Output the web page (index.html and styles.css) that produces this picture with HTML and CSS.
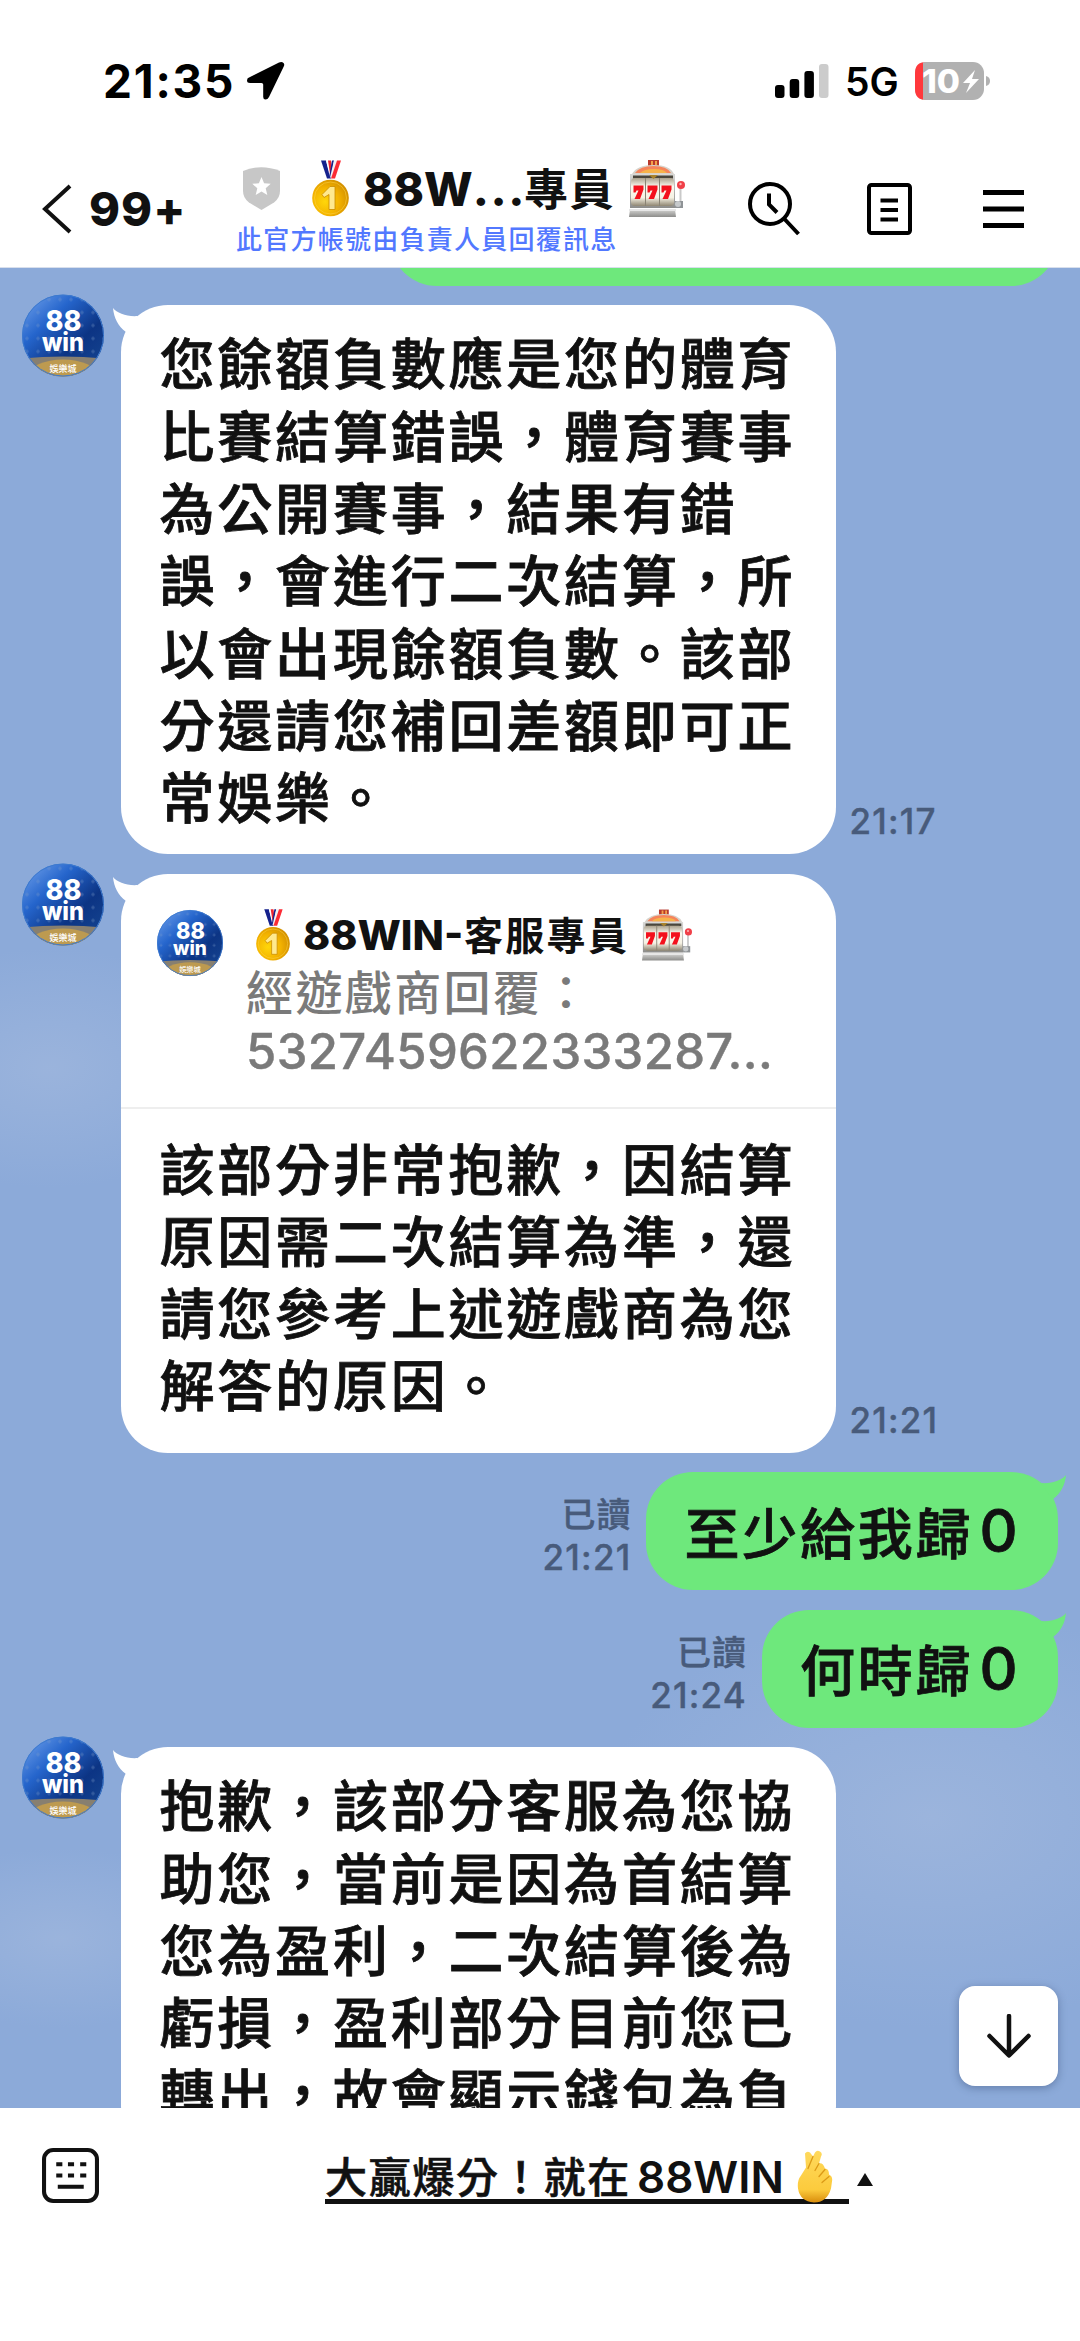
FILE: index.html
```html
<!DOCTYPE html>
<html lang="zh-Hant">
<head>
<meta charset="utf-8">
<title>88WIN-客服專員</title>
<link rel="stylesheet" href="styles.css">
</head>
<body>
<svg class="defs" width="0" height="0" aria-hidden="true">
  <defs>
    <linearGradient id="navy" x1="0" y1="0.1" x2="0.75" y2="0.9"><stop offset="0" stop-color="#6a9ce8"/><stop offset=".35" stop-color="#2565cc"/><stop offset=".75" stop-color="#0c3484"/><stop offset="1" stop-color="#123f8c"/></linearGradient>
    <radialGradient id="gold" cx=".35" cy=".6" r=".7"><stop offset="0" stop-color="#ffd60a"/><stop offset=".55" stop-color="#f3b200"/><stop offset="1" stop-color="#cf8c00"/></radialGradient>
    <linearGradient id="reel" x1="0" y1="0" x2="0" y2="1"><stop offset="0" stop-color="#aaa08c"/><stop offset=".3" stop-color="#fbf8ee"/><stop offset=".7" stop-color="#f6f2e4"/><stop offset="1" stop-color="#8f8672"/></linearGradient>
    <linearGradient id="steel" x1="0" y1="0" x2="0" y2="1"><stop offset="0" stop-color="#d9d9d7"/><stop offset="1" stop-color="#8d8d8b"/></linearGradient>
    <linearGradient id="skin" x1="0" y1="0" x2="0" y2="1"><stop offset="0" stop-color="#ffd95c"/><stop offset=".75" stop-color="#fccb3d"/><stop offset="1" stop-color="#d98d0c"/></linearGradient>
    <clipPath id="disc"><circle cx="41" cy="41" r="41"/></clipPath>
    <pattern id="stars" width="11" height="13" patternUnits="userSpaceOnUse"><path d="M3 5h4M5 3v4" stroke="#7e9ccc" stroke-width=".7" opacity=".55"/></pattern>
  </defs>
  <symbol id="avatar" viewBox="0 0 82 82">
    <g clip-path="url(#disc)">
      <rect width="82" height="82" fill="url(#navy)"/><rect width="82" height="64" fill="url(#stars)"/>
      <path d="M0 64Q41 60 82 64v18H0z" fill="#877f70"/><ellipse cx="41" cy="80" rx="34" ry="15" fill="#bd9a50"/>
    </g>
    <circle cx="41" cy="41" r="40.500" fill="none" stroke="#3d7ace"/>
    <g fill="#fff" font-family="Inter, sans-serif" font-weight="800" text-anchor="middle">
      <text x="41.500" y="36.500" font-size="28" textLength="36" lengthAdjust="spacingAndGlyphs">88</text>
      <text x="41" y="56" font-size="25" textLength="42" lengthAdjust="spacingAndGlyphs">win</text>
      <text x="41" y="77" font-size="9" font-weight="500" font-family="Noto Sans CJK TC, sans-serif">娛樂城</text>
    </g>
  </symbol>
  <symbol id="medal" viewBox="0 0 37 56">
    <path d="M9 0h5l5 18h-4z" fill="#15218c"/><path d="M14 0h2l3 13-1 4z" fill="#fff"/><path d="M16 0h3l1 8-2 5z" fill="#ee2430"/>
    <path d="M20 0h2l-3 17h-2z" fill="#15218c"/><path d="M22 0h3l-5 17h-2z" fill="#f1f1f4"/><path d="M25 0h4l-6 18h-4z" fill="#fb2b35"/>
    <circle cx="18.500" cy="37.500" r="18.300" fill="url(#gold)"/><circle cx="18.500" cy="37.500" r="16" fill="none" stroke="#ffd84d" opacity=".5"/>
    <path d="M10 34l8-8h5v23h-6V34l-5 3z" fill="#ffe98e" stroke="#c98a00" stroke-width=".8"/>
  </symbol>
  <symbol id="slot" viewBox="0 0 56 57">
    <path d="M19 0h11v6H19z" fill="#b83a2d"/><path d="M22 1h2v4h-2zM26 1h2v4h-2z" fill="#f4a24a"/>
    <path d="M3 14Q8 5 24.500 5T45 14z" fill="#d8d3cc"/><path d="M6 13Q11 6 24.500 6T42 13z" fill="#f6845a"/><path d="M11 13q4-4 14-4t13 4z" fill="#f7b34a"/>
    <path d="M1 14h45v34H1z" fill="url(#steel)"/><path d="M4 15.500h40v3H4z" fill="#4a463c"/>
    <rect x="2" y="18" width="43" height="28" rx="4" fill="url(#reel)"/>
    <path d="M16.500 18v28M30.500 18v28" stroke="#8a8374"/><path d="M20 15h9l-4.500 4z" fill="#a8832e"/>
    <path id="seven" d="M4.500 25.500h10v4l-3.500 9.500H5.500l4-8.500H7.500l-1 2h-2z" fill="#f3101c"/><use href="#seven" x="14"/><use href="#seven" x="28"/>
    <path d="M1 49h45l1 8H0z" fill="url(#steel)"/><path d="M0 50h47" stroke="#e7e7e7" stroke-width="2"/>
    <path d="M51.500 27v16" stroke="#c9c9c9" stroke-width="2"/><circle cx="52" cy="25" r="4" fill="#f04049"/><circle cx="51.500" cy="24" r="1.200" fill="#ffb4b4"/>
    <path d="M46 41h8v7h-8z" fill="#8f9396"/><circle cx="49" cy="44" r="3" fill="#c6c9cb"/>
  </symbol>
  <symbol id="tail" viewBox="0 0 26 26"><path d="M0 0C4 5 14 9 25 8L18 18 13 24C5 18 1 10 0 0z"/></symbol>
</svg>

<div class="screen">
  <div class="status">
    <span class="clock">21:35</span>
    <svg class="locate" viewBox="0 0 39 39"><path d="M3 16.500L33 1.500Q36 .5 37.500 2T37.500 6L23 36q-1.300 2.500-3.500 2.500T17.200 36V23.500Q17.200 22 15.500 22H4Q1 22 1 19.500T3 16.500z"/></svg>
    <svg class="signal" viewBox="0 0 54 34"><rect y="21" width="9.500" height="13" rx="3"/><rect x="14.700" y="15" width="9.500" height="19" rx="3"/><rect x="29.400" y="7" width="9.500" height="27" rx="3"/><rect x="44" width="9.500" height="34" rx="3" fill="#ccc"/></svg>
    <span class="network">5G</span>
    <svg class="battery" viewBox="0 0 76 38"><rect width="69" height="38" rx="11" fill="#b1b1b1"/><path d="M8 0H11Q0 0 0 11v16Q0 38 11 38H8z" fill="#ff383c"/><path d="M71 14q4 1 4 5t-4 5z" fill="#b1b1b1"/><text x="7" y="31" textLength="38" lengthAdjust="spacingAndGlyphs">10</text><path d="M60 8L48 21h7l-4 10 13-14h-7z" fill="#fff"/></svg>
  </div>

  <div class="nav">
    <svg class="back" viewBox="0 0 30 50"><path d="M28 2L3 25l25 23"/></svg>
    <span class="unread">99+</span>
    <div class="heading">
      <div class="name">
        <svg class="shield" viewBox="0 0 37 43"><path d="M0 4Q18 -3.500 37 4V24Q37 31 31 35.500L18.500 43 6 35.500Q0 31 0 24z" fill="#c7c7c7"/><path d="M18.500 10l2.600 6.200 6.600.6-5 4.500 1.600 6.700-5.800-3.600-5.800 3.600 1.600-6.700-5-4.500 6.600-.6z" fill="#fff"/></svg>
        <svg class="medal"><use href="#medal"/></svg>
        <span class="latin">88W<span class="dots">...</span></span><span class="han">專員</span>
        <svg class="slot"><use href="#slot"/></svg>
      </div>
      <div class="subtitle">此官方帳號由負責人員回覆訊息</div>
    </div>
    <svg class="tool search" viewBox="0 0 52 56"><circle cx="22" cy="23" r="20"/><path d="M36 37.500L50.500 53M21 12.500v11l8 8"/></svg>
    <svg class="tool note" viewBox="0 0 46 52"><rect x="3" y="2" width="41" height="48" rx="2.500"/><path d="M14.500 17.500H32M14.500 27H32M14.500 36.500H32"/></svg>
    <svg class="tool menu" viewBox="0 0 42 40"><path d="M0 3.500h41M0 20h41M0 36.500h41"/></svg>
  </div>

  <div class="chat">
    <div class="row sent cut"><div class="bubble"></div></div>

    <div class="row">
      <svg class="avatar"><use href="#avatar"/></svg>
      <div class="bubble"><svg class="tail"><use href="#tail"/></svg>
        <p>您餘額負數應是您的體育<br>比賽結算錯誤，體育賽事<br>為公開賽事，結果有錯<br>誤，會進行二次結算，所<br>以會出現餘額負數。該部<br>分還請您補回差額即可正<br>常娛樂。</p>
      </div>
      <div class="meta">21:17</div>
    </div>

    <div class="row">
      <svg class="avatar"><use href="#avatar"/></svg>
      <div class="bubble reply"><svg class="tail"><use href="#tail"/></svg>
        <div class="quote">
          <svg class="face"><use href="#avatar"/></svg>
          <div class="excerpt">
            <div class="author"><svg class="medal"><use href="#medal"/></svg><span class="latin">88WIN-</span><span class="han">客服專員</span><svg class="slot"><use href="#slot"/></svg></div>
            <div class="line">經遊戲商回覆：</div>
            <div class="digits">5327459622333287...</div>
          </div>
        </div>
        <p>該部分非常抱歉，因結算<br>原因需二次結算為準，還<br>請您參考上述遊戲商為您<br>解答的原因。</p>
      </div>
      <div class="meta">21:21</div>
    </div>

    <div class="row sent">
      <div class="meta"><span class="read">已讀</span>21:21</div>
      <div class="bubble"><svg class="tail"><use href="#tail"/></svg><p>至少給我歸<span class="zero">0</span></p></div>
    </div>

    <div class="row sent">
      <div class="meta"><span class="read">已讀</span>21:24</div>
      <div class="bubble"><svg class="tail"><use href="#tail"/></svg><p>何時歸<span class="zero">0</span></p></div>
    </div>

    <div class="row">
      <svg class="avatar"><use href="#avatar"/></svg>
      <div class="bubble"><svg class="tail"><use href="#tail"/></svg>
        <p>抱歉，該部分客服為您協<br>助您，當前是因為首結算<br>您為盈利，二次結算後為<br>虧損，盈利部分目前您已<br>轉出，故會顯示錢包為負</p>
      </div>
    </div>

    <div class="jump"><svg viewBox="0 0 44 44"><path d="M22 2v39M2.500 22L22 41.500 41.500 22"/></svg></div>
  </div>

  <div class="footer">
    <svg class="keyboard" viewBox="0 0 56 54"><rect x="2" y="2" width="52" height="50" rx="9"/><path d="M14 16h6M25.500 16h6M37.500 16h6M14 27h6M25.500 27h6M37.500 27h6M15.500 38H41"/></svg>
    <div class="banner"><span class="han">大贏爆分！就在</span><span class="latin">88WIN</span>
      <svg class="fingers" viewBox="0 0 36 52"><path d="M8 3Q10 0 13 2L16 6 18 2Q20-1 23 1T24 6L22 13Q26 12 28 18 32 18 32 24 36 26 35 31L34 38Q30 52 17 52 3 51 1 38 0 30 4 25L9 17z" fill="url(#skin)"/><path d="M16 6L11 18M22 13L18 20M28 19L22 26M32 26L25 32" stroke="#dc9a16" stroke-width="1.300" fill="none" stroke-linecap="round"/></svg>
    </div>
    <svg class="caret" viewBox="0 0 16 13"><path d="M8 0l8 13H0z"/></svg>
  </div>
</div>
</body>
</html>
```
FILE: styles.css
```css
* { box-sizing: border-box; }
body { margin: 0; background: #fff; color: #111; font-family: Inter, "Noto Sans CJK TC", sans-serif; }
.defs { position: absolute; }
.screen { width: 1080px; height: 2341px; display: flex; flex-direction: column; overflow: hidden; white-space: nowrap; }
.screen svg { display: block; flex: none; }
p { margin: 0; }
.han { font-family: "Noto Sans CJK TC", sans-serif; }

/* status bar */
.status { height: 150px; flex: none; padding: 11px 0 0 103px; display: flex; align-items: center; color: #000; }
.clock { width: 143px; font-size: 46px; font-weight: 700; letter-spacing: 1.800px; }
.locate { width: 39px; height: 39px; }
.signal { width: 54px; height: 34px; margin-left: 490px; }
.network { width: 70px; margin-left: 16px; padding-top: 2px; font-size: 39px; font-weight: 600; }
.battery { width: 76px; height: 38px; }
.battery text { font-size: 32px; font-weight: 800; fill: #fff; }

/* navigation bar */
.nav { height: 118px; flex: none; padding-left: 42px; display: flex; align-items: center; border-bottom: 1px solid #d8dfec; }
.back { width: 30px; height: 50px; fill: none; stroke: #111; stroke-width: 4; }
.unread { width: 147px; margin-left: 17px; font-size: 47px; font-weight: 800; letter-spacing: 1px; }
.heading { width: 512px; height: 118px; padding-top: 6px; }
.name { height: 66px; display: flex; align-items: center; padding-left: 7px; font-size: 46px; font-weight: 800; }
.shield { width: 37px; height: 43px; }
.name .medal { width: 37px; height: 57px; margin-left: 32px; }
.name .latin { width: 161px; margin-left: 14px; }
.dots { letter-spacing: 1.500px; }
.name .han { width: 105px; font-size: 44px; font-weight: 700; letter-spacing: 1.500px; padding-bottom: 3px; }
.name .slot { width: 56px; height: 57px; }
.subtitle { height: 36px; line-height: 32px; font-size: 26px; font-weight: 500; letter-spacing: 1.250px; color: #5278ff; font-family: "Noto Sans CJK TC", sans-serif; }
.tool { fill: none; stroke: #000; stroke-width: 4; }
.search { width: 52px; height: 56px; }
.note { width: 46px; height: 52px; margin-left: 66px; }
.menu { width: 42px; height: 40px; margin-left: 71px; stroke-width: 5; }

/* conversation */
.chat { position: relative; flex: 1; min-height: 0; overflow: hidden; padding-left: 22px; padding-right: 22.500px; display: flex; flex-direction: column; gap: 19.200px;
  background:
    radial-gradient(190px 120px at 50px 800px, rgba(158,182,221,.8), rgba(158,182,221,0)),
    radial-gradient(170px 90px at 60px 1670px, rgba(158,182,221,.8), rgba(158,182,221,0)),
    radial-gradient(330px 210px at 930px 1550px, rgba(158,182,221,.85), rgba(158,182,221,0)),
    #8caad9; }
.row { display: flex; align-items: flex-start; flex: none; }
.avatar { width: 82px; height: 83px; margin: -11px 17px 0 0; }
.bubble { position: relative; width: 714.500px; border-radius: 47px; background: #fff; padding: 19.500px 38px 23.800px 38.500px; }
.bubble p { font-family: "Noto Sans CJK TC", sans-serif; font-weight: 500; font-size: 55px; line-height: 72.300px; letter-spacing: 2.800px; -webkit-text-stroke: .8px #111; }
.tail { position: absolute; left: -8px; top: 3px; width: 26px; height: 26px; fill: #fff; }
.meta { align-self: flex-end; margin-left: 14px; padding-bottom: 11px; font-size: 35px; line-height: 43px; font-weight: 500; letter-spacing: 1.200px; color: #485b7b; -webkit-text-stroke: .4px #485b7b; }
.read { display: block; font-family: "Noto Sans CJK TC", sans-serif; font-size: 34px; letter-spacing: 1px; position: relative; top: -2px; }

.sent { justify-content: flex-end; }
.sent .bubble { width: auto; height: 118px; background: #6ee87c; padding: 20px 40px 0 38px; }
.sent .tail { left: auto; right: -8px; fill: #6ee87c; transform: scaleX(-1); }
.sent .meta { margin: 0 15px 0 0; text-align: right; }
.sent .bubble p { display: flex; align-items: center; }
.zero { margin-left: 6px; padding-top: 3px; font-family: Inter, sans-serif; font-size: 59px; letter-spacing: 0; }
.cut { height: 17.800px; align-items: flex-end; }
.cut .bubble { width: 668px; }

.reply { padding: 0 0 34.500px; }
.reply p { padding: 20.500px 38px 0 38.500px; }
.quote { height: 235.500px; border-bottom: 2px solid #eee; padding: 33px 0 0 36px; display: flex; }
.face { width: 66px; height: 68px; margin: 2px 23px 0 0; }
.author { height: 56px; display: flex; align-items: center; padding-left: 10px; font-size: 41px; font-weight: 800; }
.author .medal { width: 34px; height: 52px; }
.author .latin { width: 161px; margin-left: 13px; }
.author .han { width: 178px; font-size: 39px; font-weight: 700; letter-spacing: 2.300px; padding-bottom: 4px; }
.author .slot { width: 50px; height: 52px; }
.line, .digits { height: 58px; line-height: 58px; color: #7a7a7a; font-weight: 500; }
.line { line-height: 53px; font-family: "Noto Sans CJK TC", sans-serif; font-size: 47px; letter-spacing: 2.400px; }
.digits { line-height: 61px; font-size: 49px; letter-spacing: .35px; -webkit-text-stroke: .4px #7a7a7a; }

.jump { position: absolute; left: 959px; top: 1718px; width: 98.500px; height: 100px; border-radius: 16px; background: #fff; box-shadow: 0 2px 8px rgba(40,60,100,.4); display: flex; align-items: center; justify-content: center; }
.jump svg { width: 44px; height: 44px; margin-left: 2px; fill: none; stroke: #111; stroke-width: 4.500; stroke-linecap: round; stroke-linejoin: round; }

/* rich-menu bar */
.footer { height: 233.500px; flex: none; padding: 40px 0 0 42px; display: flex; align-items: flex-start; }
.keyboard { width: 57px; height: 55px; fill: none; stroke: #111; stroke-width: 4; }
.banner { width: 524px; height: 56px; margin-left: 226px; border-bottom: 5px solid #111; display: flex; align-items: center; }
.banner .han { width: 312px; padding-top: 2px; font-size: 42px; font-weight: 500; letter-spacing: 1.700px; -webkit-text-stroke: .6px #111; }
.banner .latin { width: 160px; padding-top: 8px; font-size: 44px; font-weight: 600; }
.fingers { width: 36px; height: 53px; position: relative; top: 3px; }
.caret { width: 16px; height: 13px; margin: 25px 0 0 8px; fill: #111; }
```
